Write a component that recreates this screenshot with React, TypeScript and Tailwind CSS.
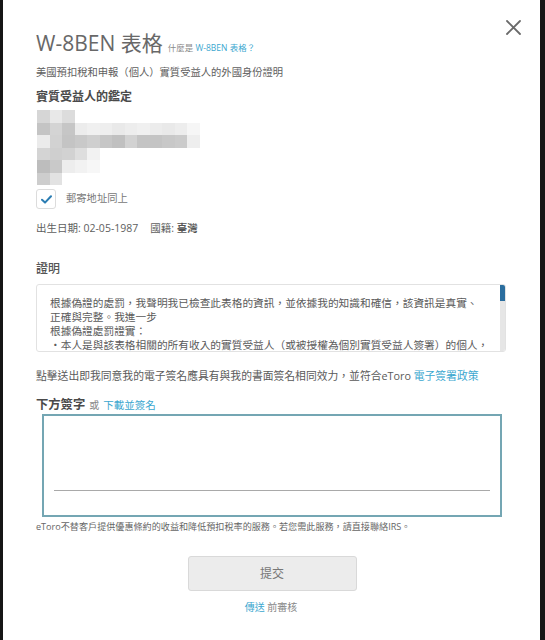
import React from "react";

const FONT = { fontFamily: '"Open Sans", "Noto Sans CJK TC", sans-serif' };

// Mosaic used to mask the beneficiary's name and address
const MOSAIC: string[][] = [
  ["#d6d6d6", "#e8e8e8", "#dcdcdc"],
  ["#c4c4c4", "#d4d4d4", "#c6c6c6", "#ececec", "#f0f0f0", "#eeeeee", "#e9e9e9", "#ededed", "#f0f0f0", "#ececec", "#e9e9e9", "#ededed", "#f6f6f6"],
  ["#ebebeb", "#d2d2d2", "#c4c4c4", "#c9c9c9", "#cfcfcf", "#c6c6c6", "#c0c0c0", "#d2d2d2", "#c4c4c4", "#c4c4c4", "#c8c8c8", "#cbcbcb", "#eeeeee"],
  ["#d4d4d4", "#cfcfcf", "#d2d2d2", "#dedede", "#f2f2f2"],
  ["#bdbdbd", "#c9c9c9", "#ededed", "#f2f2f2", "#f7f7f7"],
  ["#cdcdcd", "#e2e2e2"],
];

function Mosaic() {
  return (
    <div className="mt-[5px] ml-[1px] flex flex-col blur-[0.6px]">
      {MOSAIC.map((row, r) => (
        <div key={r} className="flex h-[12.5px]">
          {row.map((c, i) => (
            <div key={i} className="h-full w-[12.5px]" style={{ backgroundColor: c }} />
          ))}
        </div>
      ))}
    </div>
  );
}

export default function App() {
  return (
    <div className="flex h-[640px] w-full bg-[#161616]" style={FONT}>
      <div className="relative ml-[3px] h-full w-[537px] bg-white pl-[33px]">
        {/* close button */}
        <button className="absolute left-[502px] top-[19px] flex h-[17px] w-[17px] items-center justify-center">
          <svg width="15" height="15" viewBox="0 0 15 15">
            <path d="M1 1 L14 14 M14 1 L1 14" stroke="#6a6a6a" strokeWidth="1.8" strokeLinecap="round" />
          </svg>
        </button>

        <div className="flex items-baseline pt-[31px] leading-[24px]">
          <span className="text-[21px] text-[#686868]">W-8BEN 表格</span>
          <span className="ml-[5px] text-[8.5px] text-[#8a8a8a]">
            什麼是 <span className="text-[#3ba7cf]">W-8BEN 表格？</span>
          </span>
        </div>

        <div className="mt-[4px] text-[10.3px] leading-[16px] text-[#5e5e5e]">
          美國預扣稅和申報（個人）實質受益人的外國身份證明
        </div>

        <div className="mt-[9px] text-[12px] font-bold leading-[16px] text-[#4a4a4a]">實質受益人的鑑定</div>

        <Mosaic />

        <div className="mt-[4px] flex h-[20px] items-center">
          <div className="flex h-[20px] w-[20px] items-center justify-center rounded-[3px] border border-[#dcdcdc]">
            <svg width="11" height="9" viewBox="0 0 11 9">
              <path d="M1 4.8 L4 7.6 L10 1.2" fill="none" stroke="#2b7db3" strokeWidth="2" strokeLinecap="round" strokeLinejoin="round" />
            </svg>
          </div>
          <span className="ml-[10px] text-[10.3px] text-[#777]">郵寄地址同上</span>
        </div>

        <div className="mt-[11px] flex text-[10.5px] leading-[16px] text-[#5e5e5e]">
          <span>出生日期: 02-05-1987</span>
          <span className="ml-[12px]">
            國籍: <span className="font-bold text-[#555]">臺灣</span>
          </span>
        </div>

        <div className="mt-[25px] text-[12px] font-medium leading-[16px] text-[#555]">證明</div>

        {/* certification text, scrolled */}
        <div className="relative mt-[7px] h-[68px] w-[470px] overflow-hidden rounded-[3px] border border-[#e2e2e2]">
          <div className="whitespace-nowrap pl-[13px] pt-[11px] text-[10.7px] leading-[14px] text-[#5a5a5a]">
            <div>根據偽證的處罰，我聲明我已檢查此表格的資訊，並依據我的知識和確信，該資訊是真實、</div>
            <div>正確與完整。我進一步</div>
            <div>根據偽證處罰證實：</div>
            <div>・本人是與該表格相關的所有收入的實質受益人（或被授權為個別實質受益人簽署）的個人，</div>
          </div>
          <div className="absolute right-0 top-0 h-full w-[5px] bg-[#e6e6e6]">
            <div className="h-[16px] w-full bg-[#2a6d9e]" />
          </div>
        </div>

        <div className="mt-[16px] whitespace-nowrap text-[10.8px] leading-[16px] text-[#5a5a5a]">
          點擊送出即我同意我的電子簽名應具有與我的書面簽名相同效力，並符合eToro{" "}
          <span className="text-[#3ba7cf]">電子簽署政策</span>
        </div>

        <div className="mt-[12px] flex items-baseline leading-[18px]">
          <span className="text-[12.3px] font-bold text-[#4a4a4a]">下方簽字</span>
          <span className="ml-[4px] text-[10px] text-[#888]">或</span>
          <span className="ml-[4px] text-[10.5px] text-[#3ba7cf]">下載並簽名</span>
        </div>

        {/* signature pad */}
        <div className="ml-[6px] flex h-[103px] w-[460px] flex-col border-2 border-[#74a6b3] px-[10px]">
          <div className="mt-auto mb-[24px] h-px w-full bg-[#a9a9a9]" />
        </div>

        <div className="mt-[4px] whitespace-nowrap text-[9.1px] leading-[12px] text-[#666]">
          eToro不替客戶提供優惠條約的收益和降低預扣稅率的服務。若您需此服務，請直接聯絡IRS。
        </div>

        <div className="mt-[23px] flex w-[470px] flex-col items-center">
          <button className="ml-[2px] flex h-[35px] w-[169px] items-center justify-center rounded-[3px] border border-[#d9d9d9] bg-[#ececec] text-[12px] text-[#777]">
            提交
          </button>
          <div className="mt-[9px] text-[10px] leading-[14px] text-[#888]">
            <span className="text-[#3ba7cf]">傳送</span> 前審核
          </div>
        </div>
      </div>
    </div>
  );
}
